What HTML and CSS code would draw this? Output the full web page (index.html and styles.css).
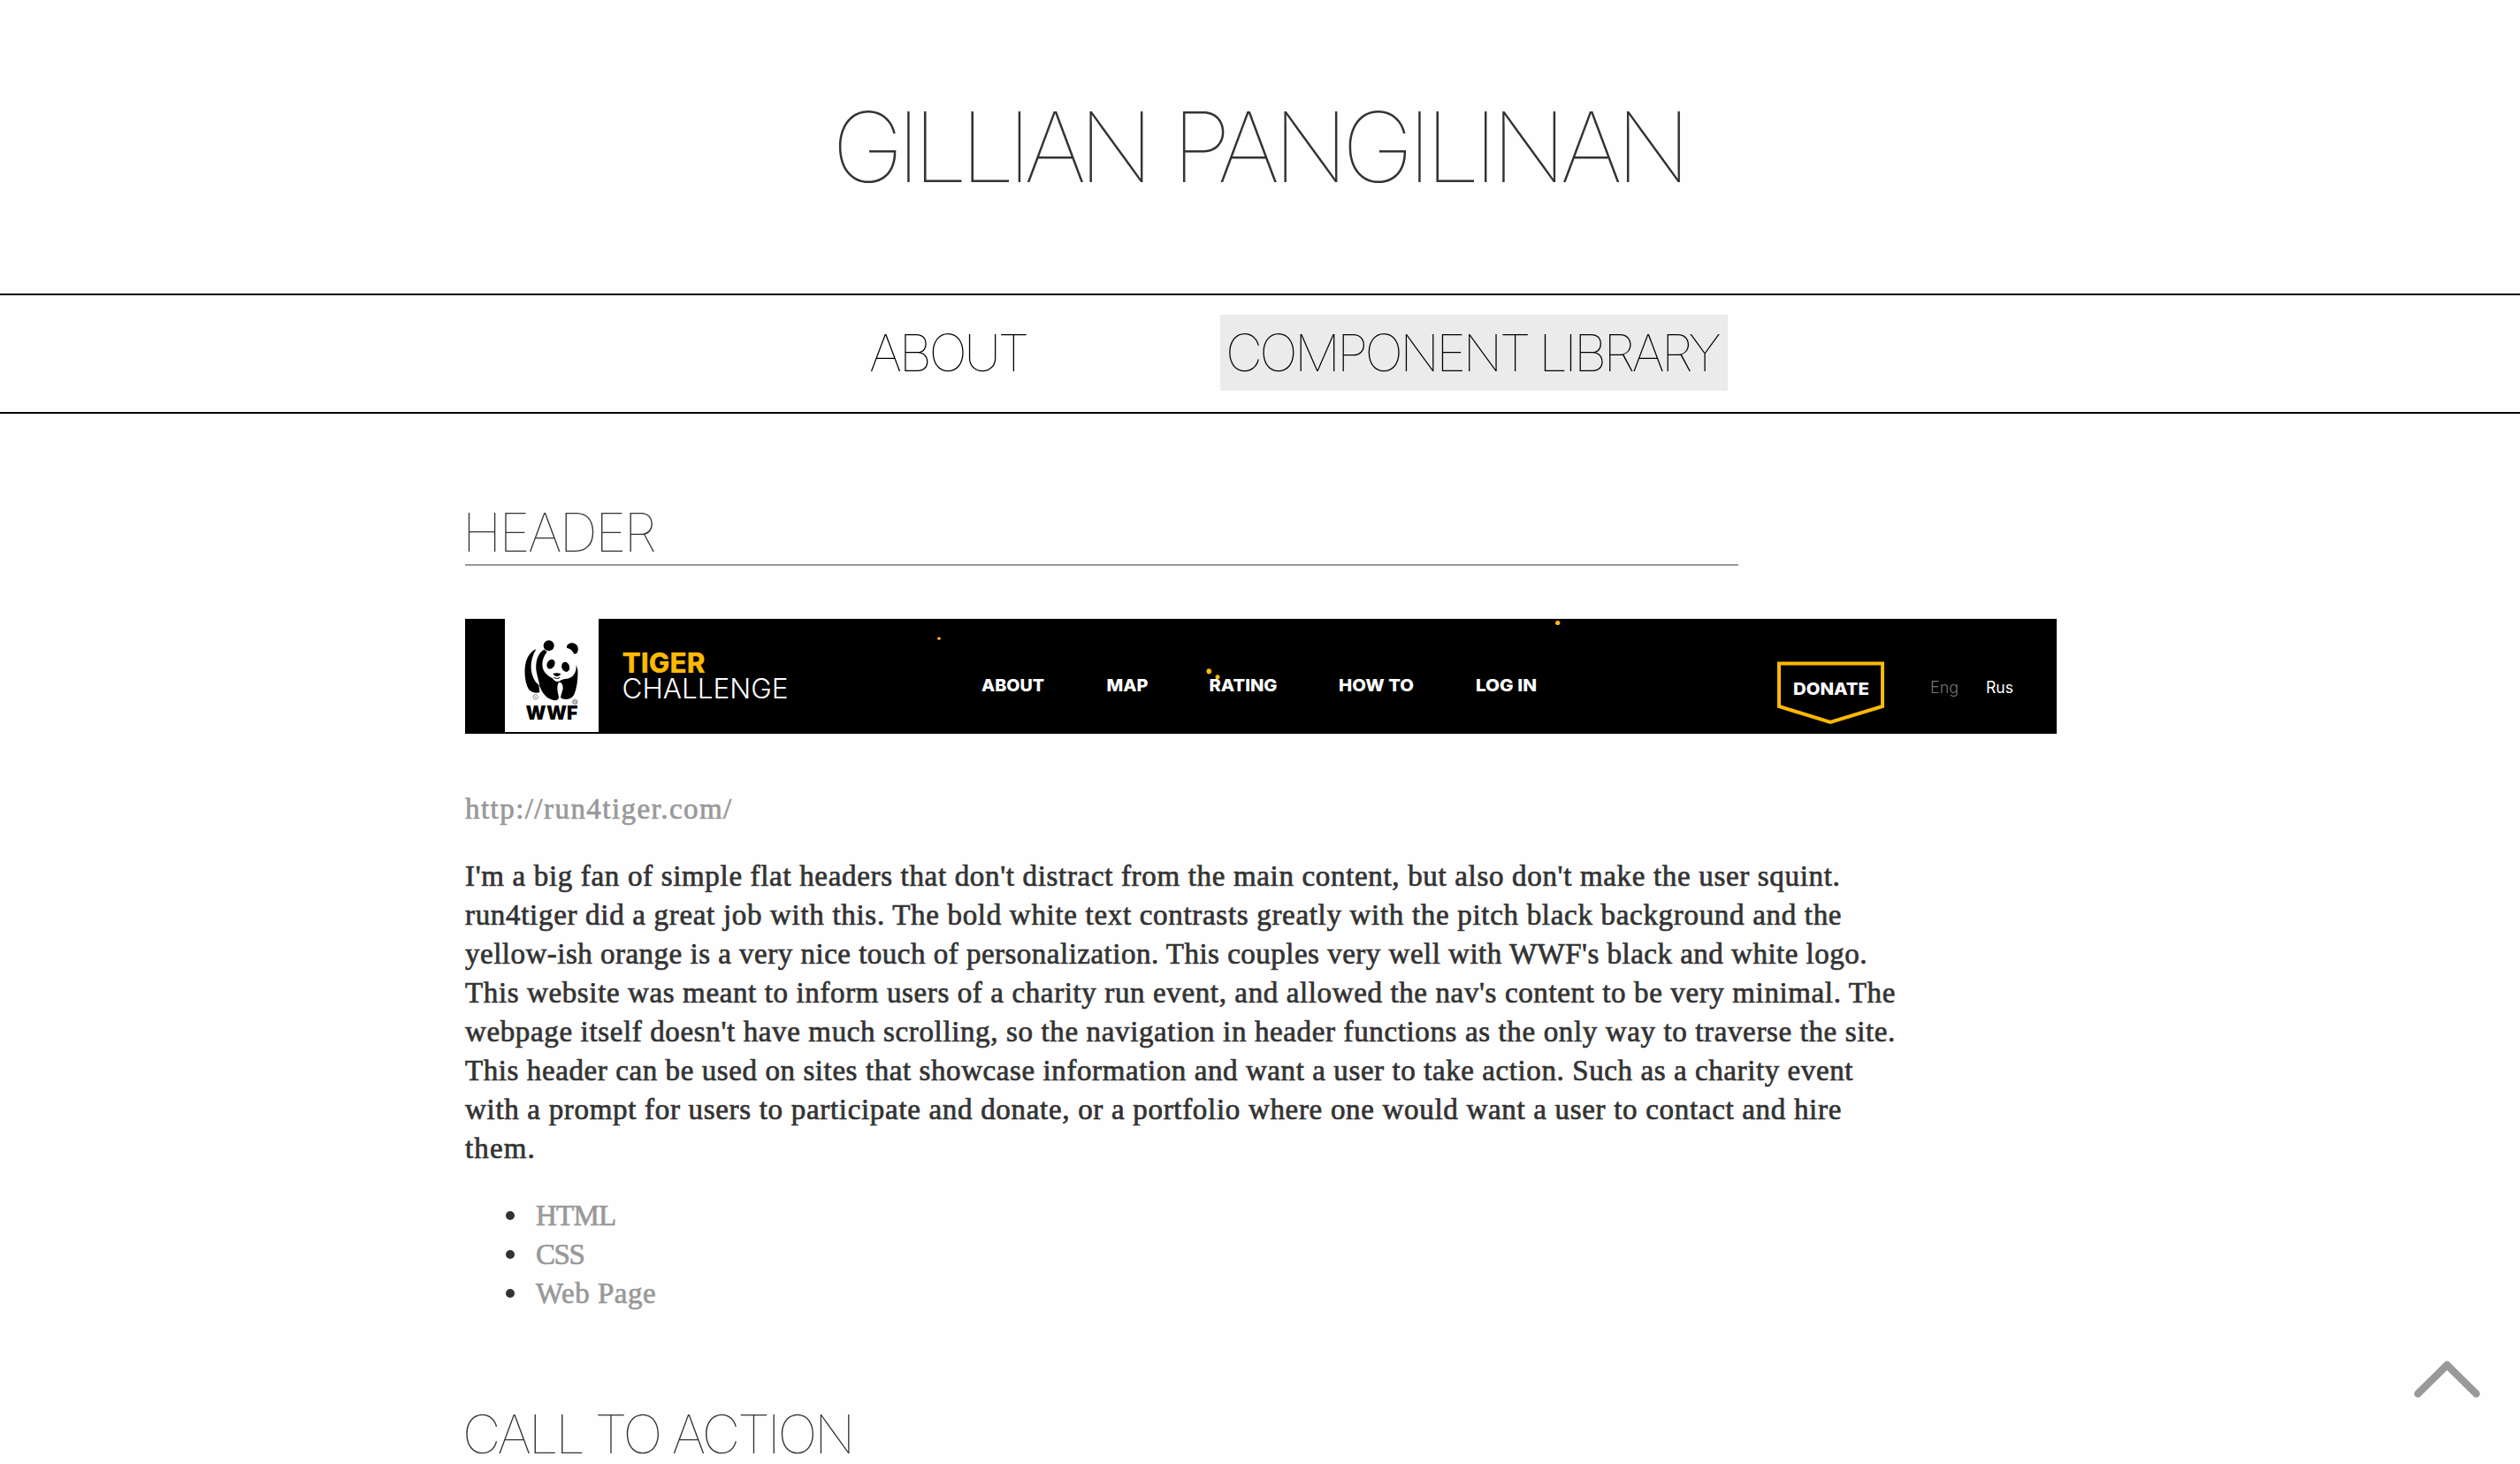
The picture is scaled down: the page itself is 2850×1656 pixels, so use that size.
FILE: index.html
```html
<!DOCTYPE html>
<html lang="en">
<head>
<meta charset="utf-8">
<title>Gillian Pangilinan</title>
<link rel="stylesheet" href="styles.css">
</head>
<body>
<header class="masthead"><h1 class="site-title"><span class="first-name">GILLIAN</span> <span class="last-name">PANGILINAN</span></h1></header>
<nav class="site-nav">
  <a class="nav-link about">ABOUT</a>
  <a class="nav-link current">COMPONENT LIBRARY</a>
</nav>
<main class="content">
  <h2 class="section-title ruled">HEADER</h2>
  <svg class="banner" viewBox="526 700 1800 130" role="img" aria-label="Tiger Challenge site header">
    <rect x="526" y="700" width="1800" height="130" fill="#000"/>
    <rect x="571" y="700" width="106" height="128" fill="#fff"/>
    <g transform="translate(560 695) scale(.33333)">
      <path d="M139 118C117 127 103 152 101 183C99 209 104 237 113 253C123 267 139 268 151 264L148 239L139 231C119 204 113 162 139 118Z"/>
      <path d="M166 119C146 131 137 156 139 186C141 207 149 225 151 244C159 266 175 289 202 292C211 292 216 288 216 280C211 262 208 241 216 231C224 228 230 239 230 251C227 263 223 275 222 282C229 290 252 291 263 279C275 265 282 222 280 188L275 170C276 191 270 205 258 213C245 221 229 218 222 224C212 232 201 227 195 217C181 210 167 200 162 184C157 164 162 146 176 127Z"/>
      <circle cx="182" cy="106" r="18"/><path d="M243 110C244 99 259 94 270 99C283 105 284 121 277 132L268 135C262 121 254 116 243 114Z"/>
      <ellipse cx="189" cy="169" rx="13" ry="17" transform="rotate(28 189 169)"/>
      <ellipse cx="239" cy="178" rx="13" ry="17" transform="rotate(-18 239 178)"/>
      <path d="M196 201Q210 196 223 202Q220 210 210 211Q200 210 196 201Z"/>
      <path d="M199 214Q209 222 220 214" fill="none" stroke="#000" stroke-width="3"/>
      <circle cx="137" cy="280" r="8" fill="none" stroke="#888" stroke-width="3"/><circle cx="137" cy="280" r="2.5" fill="#888"/>
      <circle cx="271" cy="297" r="8" fill="#bbb" stroke="#888" stroke-width="3"/>
    </g>
    <text class="wwf" x="594.5" y="814" textLength="59" lengthAdjust="spacingAndGlyphs">WWF</text>
    <text class="tiger" x="703.5" y="761" textLength="94" lengthAdjust="spacingAndGlyphs">TIGER</text>
    <text class="challenge" x="703.5" y="790" textLength="188" lengthAdjust="spacingAndGlyphs">CHALLENGE</text>
    <g fill="#fdb913"><circle cx="1062" cy="722.3" r="1.8"/><ellipse cx="1367.3" cy="759.3" rx="2.8" ry="3.1"/><circle cx="1377" cy="765.8" r="2.5"/><circle cx="1761.7" cy="704.5" r="2.6"/></g>
    <g class="menu">
      <text x="1110" y="782" textLength="71" lengthAdjust="spacingAndGlyphs">ABOUT</text>
      <text x="1251.5" y="782" textLength="47" lengthAdjust="spacingAndGlyphs">MAP</text>
      <text x="1367.5" y="782" textLength="77" lengthAdjust="spacingAndGlyphs">RATING</text>
      <text x="1514" y="782" textLength="85" lengthAdjust="spacingAndGlyphs">HOW TO</text>
      <text x="1669" y="782" textLength="69" lengthAdjust="spacingAndGlyphs">LOG IN</text>
      <text x="2028" y="786" textLength="86" lengthAdjust="spacingAndGlyphs">DONATE</text>
    </g>
    <path d="M2012 750.5H2129V799L2070 817L2012 799Z" fill="none" stroke="#ffb900" stroke-width="4"/>
    <text class="lang off" x="2183" y="784" textLength="32" lengthAdjust="spacingAndGlyphs">Eng</text>
    <text class="lang" x="2246" y="784" textLength="31" lengthAdjust="spacingAndGlyphs">Rus</text>
  </svg>
  <a class="source">http://run4tiger.com/</a>
  <p class="copy">
    <span>I'm a big fan of simple flat headers that don't distract from the main content, but also don't make the user squint.</span>
    <span>run4tiger did a great job with this. The bold white text contrasts greatly with the pitch black background and the</span>
    <span>yellow-ish orange is a very nice touch of personalization. This couples very well with WWF's black and white logo.</span>
    <span>This website was meant to inform users of a charity run event, and allowed the nav's content to be very minimal. The</span>
    <span>webpage itself doesn't have much scrolling, so the navigation in header functions as the only way to traverse the site.</span>
    <span>This header can be used on sites that showcase information and want a user to take action. Such as a charity event</span>
    <span>with a prompt for users to participate and donate, or a portfolio where one would want a user to contact and hire</span>
    <span>them.</span>
  </p>
  <ul class="tags">
    <li><a>HTML</a></li>
    <li><a>CSS</a></li>
    <li><a>Web Page</a></li>
  </ul>
  <h2 class="section-title cta">CALL TO ACTION</h2>
</main>
<a class="to-top" aria-label="Back to top"><svg viewBox="0 0 76 42"><path d="M4.5 37.5L37.5 5L70.500 37.500" fill="none" stroke="#999" stroke-width="8.400" stroke-linecap="round" stroke-linejoin="round"/></svg></a>
</body>
</html>
```
FILE: styles.css
```css
* { box-sizing: border-box; }
html { overflow: hidden; }
body {
  margin: 0;
  height: 1656px;
  overflow: hidden;
  background: #fefefe;
  color: #333;
  font-family: "Liberation Serif", serif;
  font-size: 33px;
  line-height: 44px;
}
h1, h2, p, ul { margin: 0; padding: 0; }

.masthead { height: 332px; padding-left: 941px; }
.site-title {
  display: flex;
  gap: 29px;
  font: 120 110px/332px Inter, sans-serif;
  white-space: nowrap;
}
.first-name { letter-spacing: -8.5px; }
.last-name { letter-spacing: -7.2px; }

.site-nav {
  display: flex;
  gap: 206px;
  height: 136px;
  padding: 22px 0 24px 975px;
  border: solid #000;
  border-width: 2px 0;
}
.nav-link {
  padding-left: 8px;
  color: #000;
  font: 100 58px/86px Inter, sans-serif;
  white-space: nowrap;
}
.about { width: 199px; letter-spacing: -3.4px; }
.current {
  width: 574px;
  padding-left: 6px;
  background: #ebebeb;
  letter-spacing: -3.67px;
}

.content { padding: 98px 0 0 526px; }
.section-title {
  font: 100 60px/72px Inter, sans-serif;
  letter-spacing: -2.54px;
  text-indent: -3px;
  white-space: nowrap;
}
.ruled { width: 1440px; border-bottom: 2px solid #999; margin-bottom: 60px; }
.cta { letter-spacing: -3.2px; }

.banner { display: block; width: 1800px; height: 130px; font-family: Inter, sans-serif; }
.wwf { font: 900 22px Inter, sans-serif; fill: #000; }
.tiger { font-weight: 800; font-size: 31px; fill: #ffb900; }
.challenge { font-weight: 300; font-size: 31px; fill: #fff; }
.menu { font-weight: 800; font-size: 19px; fill: #fff; }
.lang { font-size: 18px; fill: #fff; }
.off { fill: #777; font-weight: 300; }

.source, .copy, .tags { -webkit-text-stroke: .7px currentColor; }
.source { display: block; margin-top: 63px; color: #999; letter-spacing: 1.45px; }
.copy { margin-top: 32px; }
.copy span { display: block; white-space: nowrap; letter-spacing: .67px; }
.copy span:nth-child(2) { letter-spacing: .69px; }
.copy span:nth-child(3) { letter-spacing: .494px; }
.copy span:nth-child(4) { letter-spacing: .622px; }
.copy span:nth-child(5) { letter-spacing: .632px; }
.copy span:nth-child(6) { letter-spacing: .589px; }
.copy span:nth-child(7) { letter-spacing: .69px; }
.copy span:nth-child(8) { letter-spacing: 1.15px; }

.tags { margin: 32px 0 101px; padding-left: 46px; list-style: none; }
.tags li { display: flex; align-items: center; gap: 24px; letter-spacing: .5px; }
.tags li::before { content: ""; width: 10px; height: 10px; border-radius: 50%; background: #333; }
.tags a { color: #999; }
.tags li:nth-child(1) { letter-spacing: -.8px; }
.tags li:nth-child(2) { letter-spacing: -1.4px; }

.to-top { position: absolute; left: 2730px; top: 1539px; width: 76px; height: 42px; }
.to-top svg { display: block; }
```
